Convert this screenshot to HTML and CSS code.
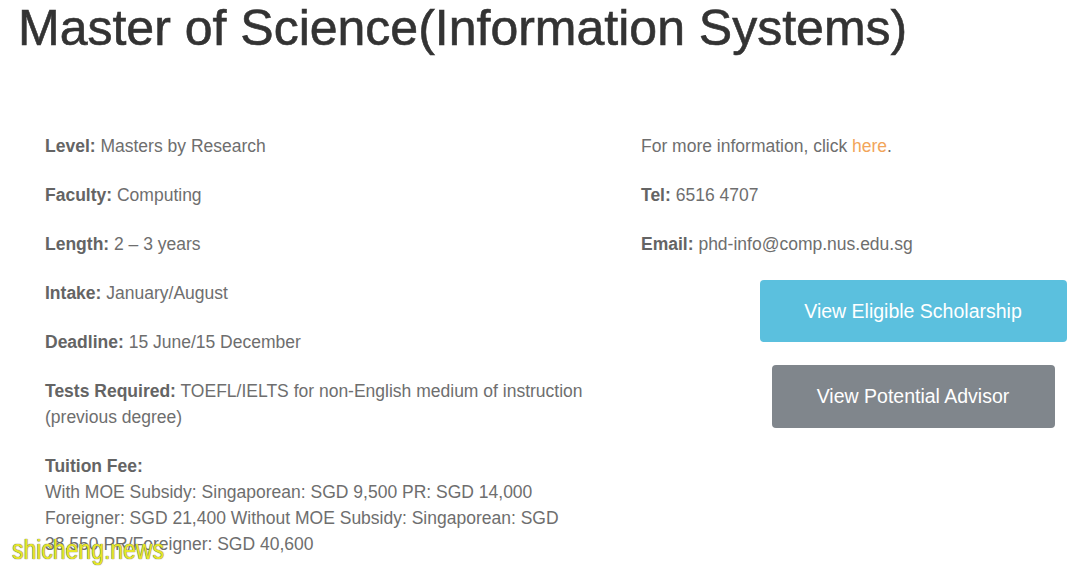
FILE: index.html
```html
<!DOCTYPE html>
<html>
<head>
<meta charset="utf-8">
<meta name="viewport" content="width=device-width,initial-scale=1.0"/>
<title>Master of Science(Information Systems)</title>
<link rel="stylesheet" href="styles.css">
</head>

<body>
<div class="page">
	<h1 class="hd">Master of Science(Information Systems)</h1>
	<div class="prog">
		<div class="prog-info">
			<p class="row"><b>Level:</b> Masters by Research</p>
			<p class="row"><b>Faculty:</b> Computing</p>
			<p class="row"><b>Length:</b> 2 – 3 years</p>
			<p class="row"><b>Intake:</b> January/August</p>
			<p class="row"><b>Deadline:</b> 15 June/15 December</p>
			<p class="row"><b>Tests Required:</b> TOEFL/IELTS for non-English medium of instruction (previous degree)</p>
			<p class="row"><b>Tuition Fee:</b><br>With MOE Subsidy: Singaporean: SGD 9,500 PR: SGD 14,000 Foreigner: SGD 21,400 Without MOE Subsidy: Singaporean: SGD 38,550 PR/Foreigner: SGD 40,600</p>
		</div>
		<div class="prog-side">
			<p class="row">For more information, click <a class="link" href="#">here</a>.</p>
			<p class="row"><b>Tel:</b> 6516 4707</p>
			<p class="row"><b>Email:</b> phd-info@comp.nus.edu.sg</p>
			<div class="btns">
				<a class="btn btn-info" href="#">View Eligible Scholarship</a>
				<a class="btn btn-grey" href="#">View Potential Advisor</a>
			</div>
		</div>
	</div>
	<div class="mark">shicheng.news</div>
</div>
</body>

</html>
```

FILE: styles.css
```css
*,*:before,*:after{
	padding: 0;
	margin: 0;
	box-sizing: border-box;
}
body{
	background: #fff;
	font-family: "Liberation Sans", Arial, sans-serif;
	color: #6e6e6e;
}
.page{
	position: relative;
	width: 1080px;
	height: 570px;
	overflow: hidden;
}
.hd{
	font-size: 50px;
	font-weight: normal;
	color: #333;
	line-height: 56px;
	padding: 0 0 0 18px;
	-webkit-text-stroke: 0.6px #333;
}
.prog{
	display: flex;
	padding: 77px 0 0 45px;
}
.prog-info{
	width: 545px;
}
.prog-side{
	margin-left: 51px;
	flex: 1;
}
.row{
	font-size: 17.5px;
	line-height: 26px;
	margin-bottom: 23px;
}
.row b{
	color: #646464;
}
.link{
	color: #f2a55a;
	text-decoration: none;
}
.btns{
	display: flex;
	flex-direction: column;
	align-items: center;
	width: 320px;
	margin: 11px 0 0 112px;
	gap: 23px;
}
.btn{
	display: block;
	color: #fff;
	font-size: 19.5px;
	text-align: center;
	text-decoration: none;
	border-radius: 4px;
	line-height: 62px;
}
.btn-info{
	width: 307px;
	background-color: #5bc0de;
}
.btn-grey{
	width: 283px;
	height: 63px;
	background-color: #80868c;
}
/* site watermark, narrow yellow lettering */
.mark{
	position: absolute;
	left: 12px;
	top: 534px;
	font-size: 28px;
	line-height: 32px;
	color: #e6e629;
	text-shadow: 0 0 1px #6a6a40, 0 0 1px #6a6a40;
	transform: scaleX(0.82);
	transform-origin: left center;
}
```
